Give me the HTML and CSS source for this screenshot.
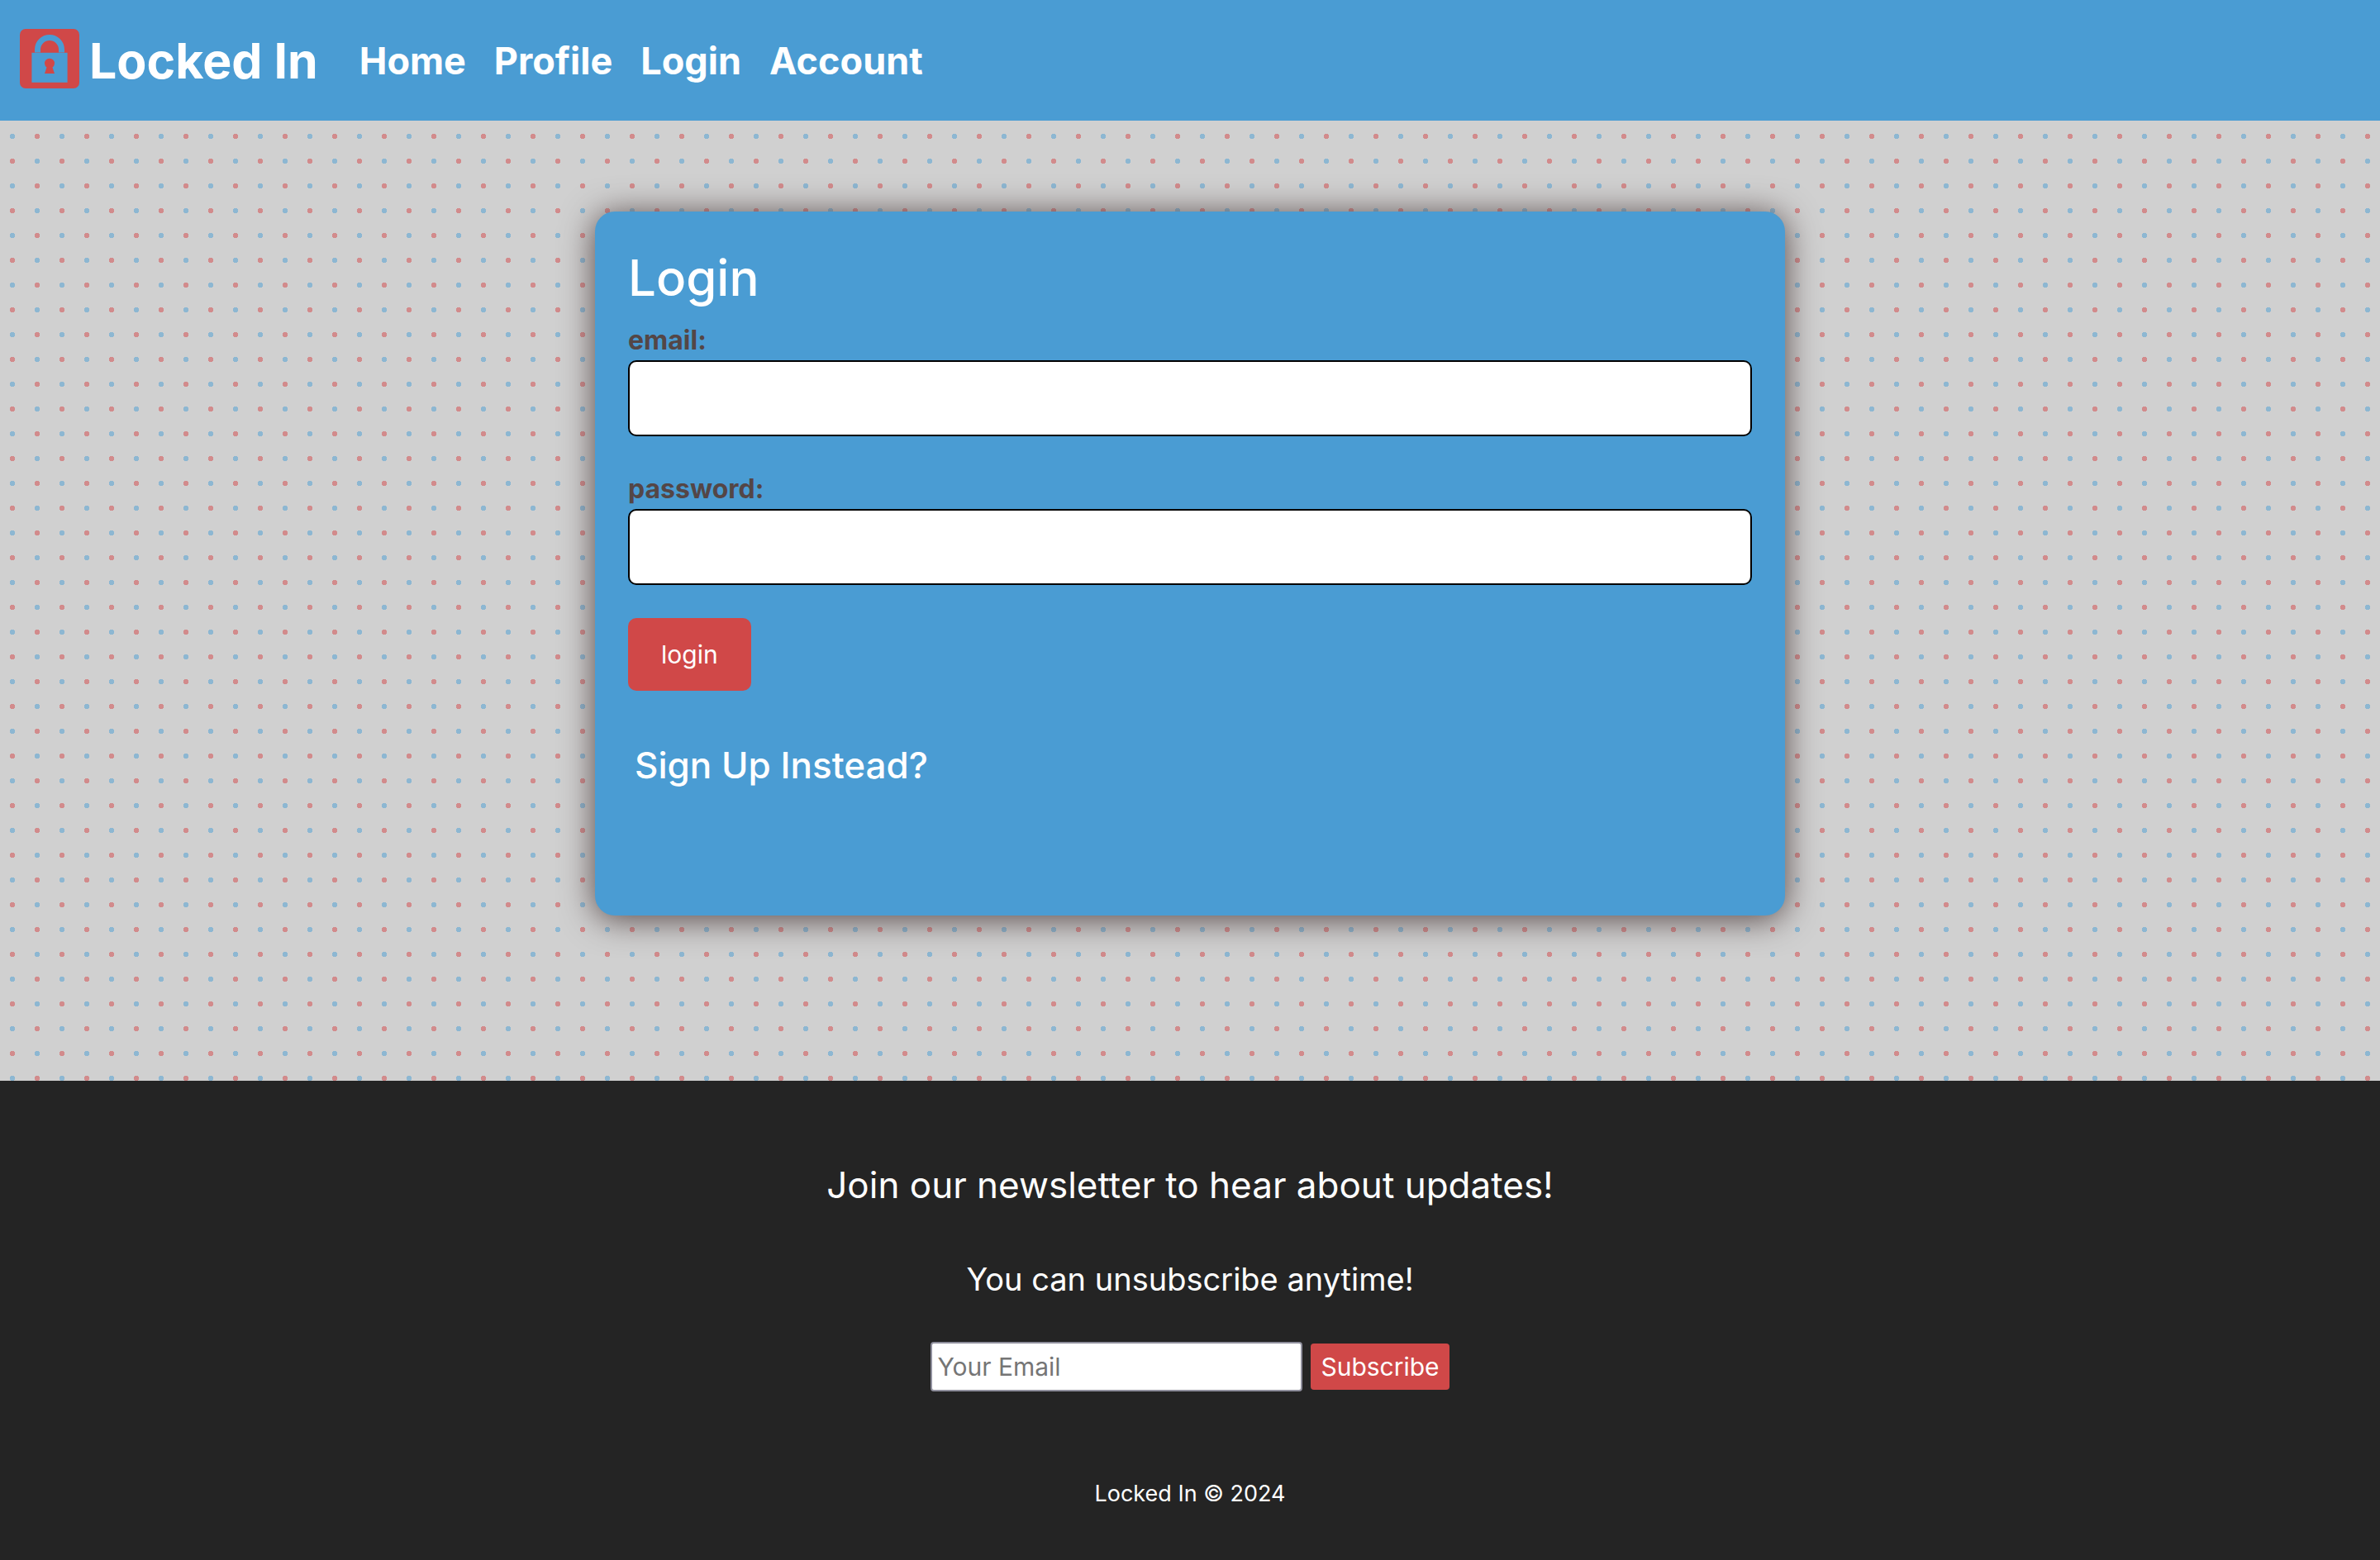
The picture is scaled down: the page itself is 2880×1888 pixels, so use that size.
FILE: index.html
```html
<!DOCTYPE html>
<html lang="en">
<head>
  <meta charset="utf-8">
  <meta name="viewport" content="width=device-width, initial-scale=1">
  <title>Locked In</title>
  <link rel="stylesheet" href="styles.css">
</head>
<body>
  <header class="navbar">
    <a class="brand" href="#">
      <svg class="brand-logo" viewBox="0 0 72 72" aria-hidden="true">
        <rect width="72" height="72" rx="7" fill="#d04848"/>
        <path d="M21.500 28.600V25a14.500 14.500 0 0 1 29 0V28.600" fill="none" stroke="#4a9cd3" stroke-width="7"/>
        <rect x="14.400" y="28.800" width="43.200" height="36" fill="#4a9cd3"/>
        <path d="M30 54L32.500 46.500A6 6 0 1 1 39.500 46.500L42 54Z" fill="#d04848"/>
      </svg>
      <span class="brand-name">Locked In</span>
    </a>
    <nav class="nav-links">
      <a href="#">Home</a>
      <a href="#">Profile</a>
      <a href="#">Login</a>
      <a href="#">Account</a>
    </nav>
  </header>

  <main class="content">
    <section class="card">
      <h1 class="card-title">Login</h1>
      <form class="login-form">
        <div class="field">
          <label for="email">email:</label>
          <input id="email" type="email">
        </div>
        <div class="field">
          <label for="password">password:</label>
          <input id="password" type="password">
        </div>
        <button class="login-button" type="button">login</button>
      </form>
      <a class="signup-link" href="#">Sign Up Instead?</a>
    </section>
  </main>

  <footer class="footer">
    <p class="footer-lead">Join our newsletter to hear about updates!</p>
    <p class="footer-note">You can unsubscribe anytime!</p>
    <form class="newsletter">
      <input class="newsletter-email" type="email" placeholder="Your Email" aria-label="Your Email">
      <button class="newsletter-button" type="button">Subscribe</button>
    </form>
    <p class="copyright">Locked In © 2024</p>
  </footer>
</body>
</html>
```
FILE: styles.css
```css
* {
  box-sizing: border-box;
}

:root {
  --blue: #4a9cd3;
  --red: #d04848;
  --dot-blue: #8db7d2;
  --dot-red: #d28b8c;
}

body {
  margin: 0;
  min-height: 100vh;
  display: flex;
  flex-direction: column;
  font-family: Inter, "Liberation Sans", sans-serif;
  font-size: 30px;
  color: #fff;
  background-color: #d0d0d0;
  background-image:
    radial-gradient(circle at 15px 15px, var(--dot-red) 3px, transparent 3px),
    radial-gradient(circle at 45px 45px, var(--dot-red) 3px, transparent 3px),
    radial-gradient(circle at 45px 15px, var(--dot-blue) 3px, transparent 3px),
    radial-gradient(circle at 15px 45px, var(--dot-blue) 3px, transparent 3px);
  background-size: 60px 60px;
}

a {
  color: inherit;
  text-decoration: none;
}

input,
button {
  font: inherit;
}

.navbar {
  display: flex;
  align-items: center;
  gap: 50px;
  height: 146px;
  padding: 0 24px;
  background: var(--blue);
  font-weight: 700;
}

.brand {
  display: flex;
  align-items: center;
  gap: 12px;
}

.brand-logo {
  width: 72px;
  height: 72px;
  margin-bottom: 4px;
}

.brand-name {
  font-size: 59px;
}

.nav-links {
  display: flex;
  gap: 34px;
  font-size: 45px;
}

.content {
  flex: 1;
  padding: 110px 0 200px;
}

.card {
  width: 50%;
  margin: 0 auto;
  padding: 40px 40px 152px;
  border-radius: 24px;
  background: var(--blue);
  box-shadow: 0 4px 40px #544646;
}

.card-title {
  margin: 0;
  font-size: 60px;
  font-weight: 500;
  line-height: 80px;
}

.login-form {
  display: flex;
  flex-direction: column;
  align-items: flex-start;
  gap: 40px;
  padding-top: 12px;
}

.field {
  display: flex;
  flex-direction: column;
  width: 100%;
}

.field label {
  color: #544646;
  font-size: 32px;
  font-weight: 700;
  line-height: 48px;
}

.field input {
  width: 100%;
  height: 92px;
  padding: 0 20px;
  border: 2px solid #000;
  border-radius: 10px;
  background: #fff;
}

.login-button {
  height: 88px;
  padding: 0 40px;
  border: 0;
  border-radius: 10px;
  background: var(--red);
  color: #fff;
}

.signup-link {
  display: block;
  padding: 60px 8px 0;
  font-size: 44px;
  font-weight: 500;
  line-height: 60px;
}

.footer {
  display: flex;
  flex-direction: column;
  align-items: center;
  padding: 96px 0 60px;
  background: #242424;
}

.footer p {
  margin: 0;
}

.footer-lead {
  font-size: 44px;
  line-height: 60px;
}

.footer .footer-note {
  margin-top: 60px;
  font-size: 38px;
  line-height: 48px;
}

.newsletter {
  display: flex;
  align-items: center;
  gap: 10px;
  margin-top: 52px;
}

.newsletter-email {
  width: 450px;
  height: 60px;
  padding: 0 6px;
  border: 2px solid #8f8f9d;
  border-radius: 4px;
  background: #fff;
}

.newsletter-email::placeholder {
  color: #757575;
}

.newsletter-button {
  height: 56px;
  padding: 0 12px;
  border: 0;
  border-radius: 4px;
  background: var(--red);
  color: #fff;
}

.footer .copyright {
  margin-top: 104px;
  font-size: 27px;
  line-height: 40px;
}
```
